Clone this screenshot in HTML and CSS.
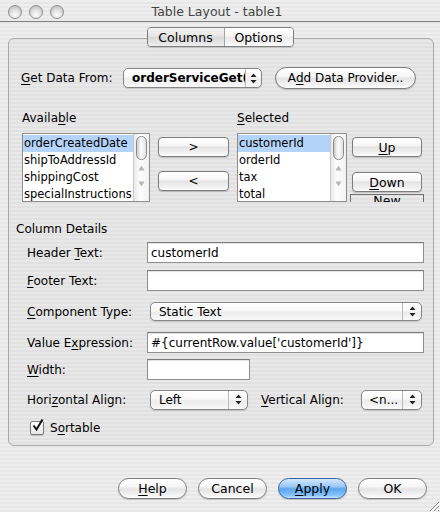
FILE: index.html
```html
<!DOCTYPE html>
<html>
<head>
<meta charset="utf-8">
<link rel="stylesheet" href="styles.css">
</head>
<body>
<div class="window">
  <div class="titlebar">
    <div class="lights"><span class="light"></span><span class="light"></span><span class="light"></span></div>
    <div class="title">Table Layout - table1</div>
  </div>
  <div class="content">
    <div class="tabs">
      <div class="seg seg-on">Columns</div>
      <div class="seg">Options</div>
    </div>
    <div class="group">
      <div class="row-data">
        <div class="lbl-data"><u>G</u>et Data From:</div>
        <div class="popup popup-data"><span class="pop-text bold">orderServiceGet(</span><span class="pop-arrows"><svg width="7" height="11" viewBox="0 0 7 11"><path d="M3.5 0.5 L6.5 4 L0.5 4 Z M3.5 10.5 L6.5 7 L0.5 7 Z" fill="#222"/></svg></span></div>
        <div class="btn pill btn-add">A<u>d</u>d Data Provider..</div>
      </div>
      <div class="row-labels">
        <div class="lbl-avail">Availa<u>b</u>le</div>
        <div class="lbl-sel"><u>S</u>elected</div>
      </div>
      <div class="row-lists">
        <div class="list list-avail">
          <div class="items">
            <div class="item on">orderCreatedDate</div>
            <div class="item">shipToAddressId</div>
            <div class="item">shippingCost</div>
            <div class="item">specialInstructions</div>
          </div>
          <div class="sbar"><div class="thumb"></div><div class="arr"><svg width="7" height="6" viewBox="0 0 7 6"><path d="M3.5 0.5 L6.5 5.5 L0.5 5.5 Z" fill="#b5b5b5"/></svg></div><div class="arr"><svg width="7" height="6" viewBox="0 0 7 6"><path d="M3.5 5.5 L6.5 0.5 L0.5 0.5 Z" fill="#b5b5b5"/></svg></div></div>
        </div>
        <div class="move-col">
          <div class="btn rect">&gt;</div>
          <div class="btn rect">&lt;</div>
        </div>
        <div class="list list-sel">
          <div class="items">
            <div class="item on">customerId</div>
            <div class="item">orderId</div>
            <div class="item">tax</div>
            <div class="item">total</div>
          </div>
          <div class="sbar"><div class="thumb"></div><div class="arr"><svg width="7" height="6" viewBox="0 0 7 6"><path d="M3.5 0.5 L6.5 5.5 L0.5 5.5 Z" fill="#b5b5b5"/></svg></div><div class="arr"><svg width="7" height="6" viewBox="0 0 7 6"><path d="M3.5 5.5 L6.5 0.5 L0.5 0.5 Z" fill="#b5b5b5"/></svg></div></div>
        </div>
        <div class="order-col">
          <div class="btn rect big"><u>U</u>p</div>
          <div class="btn rect big"><u>D</u>own</div>
          <div class="btn-new">New</div>
        </div>
      </div>
      <div class="details-title">Column Details</div>
      <div class="frow r-header">
        <div class="flbl">Header <u>T</u>ext:</div>
        <div class="field f-wide">customerId</div>
      </div>
      <div class="frow r-footer">
        <div class="flbl"><u>F</u>ooter Text:</div>
        <div class="field f-wide"></div>
      </div>
      <div class="frow r-comp">
        <div class="flbl"><u>C</u>omponent Type:</div>
        <div class="popup popup-comp"><span class="pop-text">Static Text</span><span class="pop-arrows"><svg width="7" height="11" viewBox="0 0 7 11"><path d="M3.5 0.5 L6.5 4 L0.5 4 Z M3.5 10.5 L6.5 7 L0.5 7 Z" fill="#222"/></svg></span></div>
      </div>
      <div class="frow r-value">
        <div class="flbl">Value E<u>x</u>pression:</div>
        <div class="field f-wide">#{currentRow.value['customerId']}</div>
      </div>
      <div class="frow r-width">
        <div class="flbl"><u>W</u>idth:</div>
        <div class="field f-narrow"></div>
      </div>
      <div class="frow r-align">
        <div class="flbl">Hori<u>z</u>ontal Align:</div>
        <div class="popup popup-h"><span class="pop-text">Left</span><span class="pop-arrows"><svg width="7" height="11" viewBox="0 0 7 11"><path d="M3.5 0.5 L6.5 4 L0.5 4 Z M3.5 10.5 L6.5 7 L0.5 7 Z" fill="#222"/></svg></span></div>
        <div class="vlbl"><u>V</u>ertical Align:</div>
        <div class="popup popup-v"><span class="pop-text">&lt;n...</span><span class="pop-arrows"><svg width="7" height="11" viewBox="0 0 7 11"><path d="M3.5 0.5 L6.5 4 L0.5 4 Z M3.5 10.5 L6.5 7 L0.5 7 Z" fill="#222"/></svg></span></div>
      </div>
      <div class="frow r-sort">
        <div class="check"><svg width="13" height="13" viewBox="0 0 13 13"><path d="M2.5 6.5 L5.5 10.5 L11.5 0.5" fill="none" stroke="#111" stroke-width="2"/></svg></div>
        <div class="sort-lbl">S<u>o</u>rtable</div>
      </div>
    </div>
    <div class="footer">
      <div class="btn pill fbtn"><u>H</u>elp</div>
      <div class="btn pill fbtn">Cancel</div>
      <div class="btn pill fbtn apply"><u>A</u>pply</div>
      <div class="btn pill fbtn">OK</div>
    </div>
  </div>
  <div class="grip"><svg width="12" height="12" viewBox="0 0 12 12"><path d="M11 2 L2 11 M11 6 L6 11 M11 10 L10 11" stroke="#8a8a8a" stroke-width="1"/><path d="M12 3 L3 12 M12 7 L7 12" stroke="#fff" stroke-width="1"/></svg></div>
</div>
</body>
</html>
```

FILE: styles.css
```css
html, body {
  margin: 0;
  padding: 0;
}
body {
  width: 440px;
  height: 512px;
  overflow: hidden;
  font-family: "DejaVu Sans", "Liberation Sans", sans-serif;
  font-size: 11.5px;
  color: #000;
}
u { text-decoration: underline; text-underline-offset: 2px; }
.window {
  position: relative;
  width: 440px;
  height: 512px;
  background: repeating-linear-gradient(to bottom, #eeeeee 0, #eeeeee 2px, #e7e7e7 2px, #e7e7e7 4px);
}
.titlebar {
  height: 21px;
  border-bottom: 1px solid #7c7c7c;
  display: flex;
  align-items: center;
  position: relative;
}
.lights {
  display: flex;
  gap: 7px;
  padding-left: 8px;
  padding-top: 2px;
}
.light {
  width: 12px;
  height: 12px;
  border-radius: 50%;
  border: 1px solid #8c8c8c;
  background: radial-gradient(circle at 50% 75%, #ffffff 0, #e4e4e4 40%, #b9b9b9 100%);
  box-sizing: content-box;
}
.title {
  flex: 1;
  text-align: center;
  font-size: 12.5px;
  color: #444;
  margin-left: -70px;
  padding-top: 2px;
}
.content {
  padding-top: 5px;
}
.tabs {
  position: relative;
  z-index: 1;
  display: flex;
  width: 147px;
  height: 20px;
  margin: 0 auto;
  border: 1px solid #7f7f7f;
  border-radius: 4px;
  box-sizing: border-box;
  overflow: hidden;
  box-shadow: 0 1px 1px rgba(0,0,0,0.15);
}
.seg {
  display: flex;
  align-items: center;
  justify-content: center;
  font-size: 12.5px;
  background: linear-gradient(#ffffff 0%, #f6f6f6 45%, #e9e9e9 52%, #f8f8f8 90%, #ffffff 100%);
}
.seg:first-child { width: 76px; border-right: 1px solid #a5a5a5; }
.seg:last-child { flex: 1; }
.seg-on {
  background: linear-gradient(#f4f4f4 0%, #e6e6e6 45%, #d9d9d9 52%, #e8e8e8 90%, #f0f0f0 100%);
}
.group {
  margin: -9px 0 0 8px;
  width: 426px;
  height: 408px;
  box-sizing: border-box;
  border: 1px solid #a9a9a9;
  border-radius: 6px;
  background: rgba(0,0,0,0.025);
  display: flex;
  flex-direction: column;
}
.row-data {
  display: flex;
  align-items: center;
  height: 24px;
  margin-top: 27px;
  padding-left: 12px;
}
.lbl-data { width: 102px; font-size: 12px; }
.btn {
  display: flex;
  align-items: center;
  justify-content: center;
  box-sizing: border-box;
  border: 1px solid #7d7d7d;
  background: linear-gradient(#ffffff 0%, #f7f7f7 40%, #e4e4e4 52%, #f3f3f3 85%, #ffffff 100%);
  box-shadow: 0 1px 1px rgba(0,0,0,0.18);
  font-size: 12px;
  flex-shrink: 0;
}
.big { font-size: 12.5px; }
.pill { border-radius: 11px; }
.rect { border-radius: 4px; }
.btn-add {
  width: 141px;
  height: 22px;
  margin-left: 13px;
}
.popup {
  display: flex;
  box-sizing: border-box;
  border: 1px solid #868686;
  border-radius: 5px;
  background: linear-gradient(#ffffff 0%, #f8f8f8 45%, #ececec 55%, #f9f9f9 100%);
  box-shadow: 0 1px 1px rgba(0,0,0,0.15);
  overflow: hidden;
}
.pop-text {
  flex: 1;
  display: flex;
  align-items: center;
  padding-left: 8px;
  font-size: 12px;
  white-space: nowrap;
  overflow: hidden;
}
.bold { font-weight: bold; }
.pop-arrows {
  width: 18px;
  border-left: 1px solid #b9b9b9;
  display: flex;
  align-items: center;
  justify-content: center;
}
.popup-data { width: 139px; height: 20px; }
.popup-data .pop-arrows { width: 15px; }
.row-labels {
  display: flex;
  height: 16px;
  line-height: 16px;
  margin-top: 20px;
  font-size: 12px;
}
.lbl-avail { padding-left: 13px; width: 215px; }
.row-lists {
  display: flex;
  margin-top: 7px;
  padding-left: 13px;
  height: 69px;
}
.list {
  display: flex;
  box-sizing: border-box;
  border: 1px solid #8e8e8e;
  background: #fff;
  height: 69px;
  overflow: hidden;
}
.list-avail { width: 128px; }
.list-sel { width: 110px; }
.items {
  flex: 1;
  overflow: hidden;
  padding-top: 1px;
}
.item {
  height: 17px;
  line-height: 17px;
  padding-left: 1px;
  white-space: nowrap;
  font-size: 11.5px;
}
.item.on { background: #b4d3f8; }
.sbar {
  width: 15px;
  flex-shrink: 0;
  border-left: 1px solid #c9c9c9;
  background: linear-gradient(to right, #e9e9e9, #fdfdfd 40%, #f2f2f2);
  display: flex;
  flex-direction: column;
  align-items: center;
}
.thumb {
  width: 11px;
  height: 24px;
  margin-top: 2px;
  box-sizing: border-box;
  border: 1px solid #8a8a8a;
  border-radius: 6px;
  background: linear-gradient(to right, #c9c9c9, #ffffff 45%, #e0e0e0);
  flex-shrink: 0;
}
.arr {
  height: 16px;
  display: flex;
  align-items: center;
  justify-content: center;
  flex-shrink: 0;
}
.arr:first-of-type { margin-top: 9px; }
.move-col {
  width: 71px;
  margin-left: 8px;
  display: flex;
  flex-direction: column;
  gap: 14px;
  padding-top: 4px;
}
.move-col .btn, .order-col .btn { height: 20px; }
.list-sel { margin-left: 8px; }
.order-col {
  width: 74px;
  height: 69px;
  margin-left: 3px;
  display: flex;
  flex-direction: column;
  padding-top: 4px;
  box-sizing: border-box;
  overflow: hidden;
}
.order-col .btn { margin: 0 2px; }
.order-col .btn + .btn { margin-top: 15px; }
.btn-new {
  margin-top: 2px;
  height: 20px;
  box-sizing: border-box;
  border: 1px solid #6f6f6f;
  text-align: center;
  line-height: 11px;
  font-size: 12.5px;
  flex-shrink: 0;
}
.details-title {
  margin-top: 19px;
  padding-left: 7px;
  height: 16px;
  line-height: 16px;
  font-size: 12px;
}
.frow {
  display: flex;
  align-items: center;
  height: 21px;
  padding-left: 18px;
}
.flbl { width: 120px; font-size: 12px; flex-shrink: 0; }
.r-header { margin-top: 5px; }
.r-footer { margin-top: 7px; }
.r-comp { margin-top: 10px; }
.r-value { margin-top: 10px; }
.r-width { margin-top: 6px; }
.r-align { margin-top: 9px; }
.r-sort { margin-top: 8px; padding-left: 21px; height: 20px; }
.field {
  height: 21px;
  box-sizing: border-box;
  border: 1px solid #8f8f8f;
  border-top-color: #7a7a7a;
  background: #fff;
  box-shadow: inset 0 1px 1px rgba(0,0,0,0.12);
  padding-left: 3px;
  display: flex;
  align-items: center;
  font-size: 12px;
  white-space: nowrap;
}
.f-wide { width: 277px; }
.f-narrow { width: 103px; }
.popup-comp { width: 272px; height: 19px; margin-left: 3px; }
.popup-h { width: 98px; height: 20px; margin-left: 3px; }
.vlbl { width: 100px; margin-left: 13px; font-size: 12px; }
.popup-v { width: 61px; height: 20px; }
.popup-v .pop-text { padding-left: 7px; }
.check {
  width: 14px;
  height: 14px;
  box-sizing: border-box;
  border: 1px solid #7a7a7a;
  border-radius: 2px;
  background: linear-gradient(#ffffff, #e6e6e6);
  box-shadow: 0 1px 1px rgba(0,0,0,0.15);
  position: relative;
}
.check svg { position: absolute; left: 0; top: -3px; }
.sort-lbl { margin-left: 6px; font-size: 12px; }
.footer {
  display: flex;
  justify-content: flex-end;
  gap: 11px;
  padding-right: 13px;
  margin-top: 32px;
}
.fbtn { width: 69px; height: 21px; font-size: 12.5px; }
.apply {
  border-color: #3b63a0;
  background: linear-gradient(#d3e8fd 0%, #98c8f6 40%, #5ea6ee 52%, #82c1fa 85%, #c4e3ff 100%);
}
.grip {
  position: absolute;
  right: 0;
  bottom: 0;
  width: 12px;
  height: 12px;
}
```
